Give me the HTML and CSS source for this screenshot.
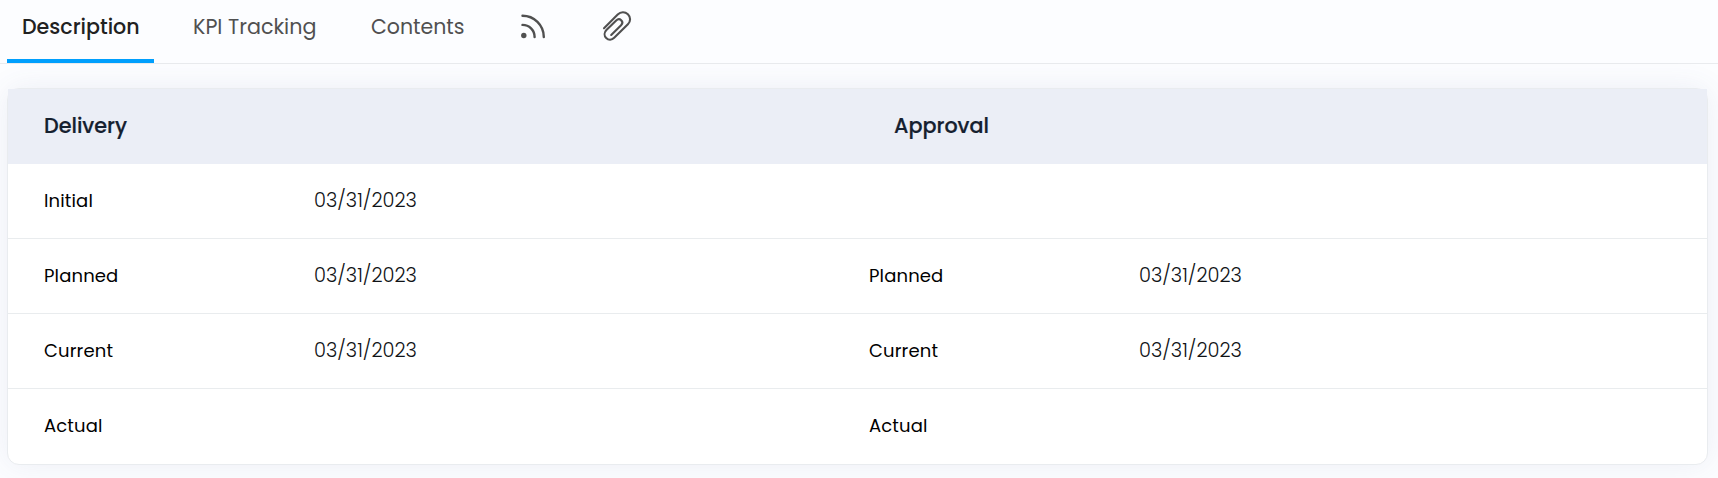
FILE: index.html
```html
<!DOCTYPE html>
<html lang="en">
<head>
    <meta charset="UTF-8">
    <meta name="viewport" content="width=device-width, initial-scale=1.0">
    <title>Description</title>
    <link rel="stylesheet" href="styles.css">
</head>
<body>
    <nav class="tabs">
        <a href="#" class="tab tab-description active"><span>Description</span></a>
        <a href="#" class="tab tab-kpi"><span>KPI Tracking</span></a>
        <a href="#" class="tab tab-contents"><span>Contents</span></a>
        <a href="#" class="tab tab-icon" aria-label="Feed">
            <svg width="26" height="26" viewBox="0 0 26 26" fill="none" stroke="#505050" stroke-width="2.4" stroke-linecap="round">
                <path d="M2.5 2.7C14 2.7 23.8 12 23.8 24"/>
                <path d="M2.5 11.9C9.2 11.9 14.6 17 14.6 24"/>
                <circle cx="3.8" cy="22.5" r="2.7" fill="#505050" stroke="none"/>
            </svg>
        </a>
        <a href="#" class="tab tab-icon" aria-label="Attachments">
            <svg width="30" height="32" viewBox="0 0 30 32" fill="none" stroke="#505050" stroke-width="2.1" stroke-linecap="round" stroke-linejoin="round">
                <path d="M2 18.3L15.7 4.6C18.7 1.6 23 1.6 25.9 4.2C28.8 7 28.8 11.4 25.9 14.3L12.2 27.8C9.9 30.1 6.4 30.2 4.2 28C2 25.8 2.1 22.3 4.4 20L14.2 10.4C15.8 8.9 17.8 8.9 19.2 10.2C20.6 11.6 20.6 13.7 19.1 15.2L9.2 25"/>
            </svg>
        </a>
    </nav>

    <div class="card">
        <div class="card-header">
            <h3>Delivery</h3>
            <h3>Approval</h3>
        </div>
        <div class="row">
            <span class="label">Initial</span>
            <span class="date">03/31/2023</span>
        </div>
        <div class="row">
            <span class="label">Planned</span>
            <span class="date">03/31/2023</span>
            <span class="label">Planned</span>
            <span class="date">03/31/2023</span>
        </div>
        <div class="row">
            <span class="label">Current</span>
            <span class="date">03/31/2023</span>
            <span class="label">Current</span>
            <span class="date">03/31/2023</span>
        </div>
        <div class="row">
            <span class="label">Actual</span>
            <span class="date"></span>
            <span class="label">Actual</span>
            <span class="date"></span>
        </div>
    </div>
</body>
</html>
```

FILE: styles.css
```css
* {
    box-sizing: border-box;
}

body {
    margin: 0;
    height: 478px;
    overflow: hidden;
    background: #fcfdff;
    font-family: Poppins, Inter, sans-serif;
}

.tabs {
    display: flex;
    height: 64px;
    padding-left: 7px;
    border-bottom: 1px solid #e9ebee;
}

.tab {
    display: flex;
    align-items: center;
    padding: 0 15px 7px;
    margin-right: 24px;
    color: #505050;
    font-size: 20.7px;
    text-decoration: none;
    white-space: nowrap;
    border-bottom: 4px solid transparent;
}

.tab.active {
    color: #212121;
    font-size: 20.6px;
    font-weight: 500;
    border-bottom-color: #009ffd;
}

.tab-description {
    width: 147px;
}

.tab-kpi {
    width: 154px;
}

.tab-contents {
    width: 125px;
    font-size: 20.5px;
}

.tab-icon {
    width: 58px;
}

.tab-icon svg {
    flex-shrink: 0;
}

.card {
    width: 1701px;
    height: 377px;
    margin: 24px 0 0 7px;
    background: #fff;
    border: 1px solid #e9ecef;
    border-radius: 12px;
    box-shadow: 0 0 30px rgba(82, 92, 140, 0.09);
}

.card-header {
    display: grid;
    grid-template-columns: 850px 1fr;
    align-items: center;
    height: 75px;
    padding: 0 0 2px 36px;
    background: #ebeef6;
}

.card-header h3 {
    margin: 0;
    color: #15202f;
    font-size: 20.7px;
    font-weight: 500;
    -webkit-text-stroke: 0.2px #15202f;
}

.row {
    display: grid;
    grid-template-columns: 270px 555px 270px 1fr;
    align-items: center;
    height: 75px;
    padding: 0 0 1px 36px;
    border-bottom: 1px solid #e9ecee;
}

.row:last-child {
    padding-bottom: 2px;
    border-bottom: none;
}

.label {
    color: #000;
    font-size: 18px;
    letter-spacing: 0.15px;
}

.date {
    color: #101316;
    font-size: 19.4px;
    font-weight: 300;
}
```
